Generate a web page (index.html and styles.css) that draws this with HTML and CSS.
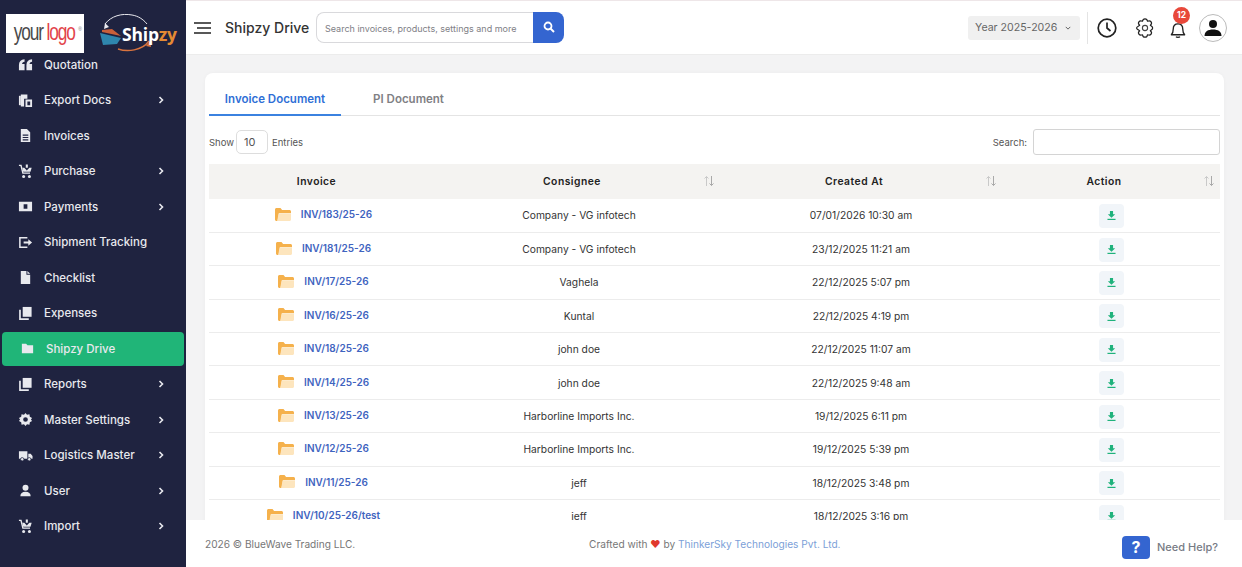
FILE: index.html
```html
<!DOCTYPE html>
<html lang="en">
<head>
<meta charset="utf-8">
<title>Shipzy Drive</title>
<link rel="stylesheet" href="styles.css">
</head>
<body>
<svg class="defs" width="0" height="0" aria-hidden="true">
  <symbol id="chev" viewBox="0 0 8 10"><path d="M2.500 2l3 3-3 3" fill="none" stroke="currentColor" stroke-width="1.600"/></symbol>
  <symbol id="cart" viewBox="0 0 16 16"><path d="M1 1.500h2.200l2 8.200h7.600" fill="none" stroke="currentColor" stroke-width="1.500"/><path d="M4.600 4h10l-1.300 4.200H5.600z M8.300 0.500h2.200V4h1.600L9.400 7 6.700 4h1.600z" fill="currentColor" fill-rule="evenodd"/><circle cx="6" cy="13.300" r="1.600" fill="currentColor"/><circle cx="12.200" cy="13.300" r="1.600" fill="currentColor"/></symbol>
  <symbol id="copy" viewBox="0 0 16 16"><path d="M5 1h9.500v10.500H5z" fill="currentColor"/><path d="M3 4H1.200v11h10.300v-2H3z" fill="currentColor"/></symbol>
  <symbol id="dl" viewBox="0 0 12 12"><path d="M4.300 1h3.400v3.600H10L6 8.400 2 4.600h2.300z" fill="currentColor"/><rect x="1.600" y="9.600" width="8.800" height="1.300" fill="currentColor"/></symbol>
  <symbol id="sort" viewBox="0 0 12 12"><path d="M3.500 11V1.500M1.500 3.500l2-2 2 2" fill="none" stroke="#c9c9c9" stroke-width="1"/><path d="M8.500 1v9.500M6.500 8.500l2 2 2-2" fill="none" stroke="#a9a9a9" stroke-width="1"/></symbol>
  <symbol id="folder" viewBox="0 0 16 13"><path d="M0 1.500C0 .7.700 0 1.500 0h4l1.600 2h7.400c.8 0 1.500.7 1.500 1.500V5H4.200L2.600 13H1.500C.7 13 0 12.300 0 11.500z" fill="#f5b14c"/><path d="M3.600 5.200H16v6.300c0 .8-.7 1.500-1.500 1.500H2.200z" fill="#fde5bd"/></symbol>
</svg>
<div class="app">
  <aside class="sidebar">
    <div class="brand">
      <div class="your-logo"><span class="your">your</span><span class="logo">logo</span><sup class="reg">®</sup></div>
      <div class="shipzy">
        <svg class="shipzy-art" viewBox="0 0 78 40" width="78" height="40" aria-hidden="true">
          <path d="M5 10C11 2 22-1 32 1c6 1 11 4 15 9" fill="none" stroke="#e9e9ee" stroke-width="1"/>
          <path d="M5 9l-1 6 5-2z" fill="#e9e9ee"/>
          <path d="M18 35c9 3 24 2 31-8" fill="none" stroke="#d9743f" stroke-width="1.400"/>
          <path d="M46 32l4-5 1 6z" fill="#d9743f"/>
          <path d="M0 19l21 5-4 6-14 1z" fill="#2f86ad"/>
          <path d="M2 16l10-1 9 7-19-4z" fill="#c9603a"/>
        </svg>
        <span class="shipzy-name">Ship<span class="zy">zy</span></span>
      </div>
    </div>
    <nav class="nav">
      <a class="item"><svg class="ic" viewBox="0 0 16 16"><path fill="currentColor" d="M1 14V8.500C1 5 3 3 7 2.500V5C5.300 5.300 4.500 6 4.300 7.500H7V14zM9 14V8.500C9 5 11 3 15 2.500V5c-1.700.3-2.500 1-2.700 2.500H15V14z"/></svg><span>Quotation</span></a>
      <a class="item"><svg class="ic" viewBox="0 0 16 16"><path fill="currentColor" d="M3 1.500h7V6H6.500v8.500H3z"/><path fill="currentColor" d="M8 7h7v8H8zM10 9v4h3V9z" fill-rule="evenodd"/><path fill="currentColor" d="M1 3h2v10H1z"/></svg><span>Export Docs</span><svg class="chev"><use href="#chev"/></svg></a>
      <a class="item"><svg class="ic" viewBox="0 0 16 16"><path fill="currentColor" fill-rule="evenodd" d="M3 1h6.500L13 4.500V15H3zM5 7v1.200h6V7zM5 9.500v1.200h6V9.500zM5 12v1.200h6V12z"/></svg><span>Invoices</span></a>
      <a class="item"><svg class="ic"><use href="#cart"/></svg><span>Purchase</span><svg class="chev"><use href="#chev"/></svg></a>
      <a class="item"><svg class="ic" viewBox="0 0 16 16"><path fill="currentColor" fill-rule="evenodd" d="M1 3h14v10H1zM6 5.500v5h4v-5z"/></svg><span>Payments</span><svg class="chev"><use href="#chev"/></svg></a>
      <a class="item"><svg class="ic" viewBox="0 0 16 16"><path fill="none" stroke="currentColor" stroke-width="1.600" d="M10 3H2v10h8"/><path fill="currentColor" d="M6 7h5V4.500L15 8l-4 3.500V9H6z"/></svg><span>Shipment Tracking</span></a>
      <a class="item"><svg class="ic" viewBox="0 0 16 16"><path fill="currentColor" d="M3 1h6v4h4v10H3z"/><path fill="currentColor" d="M10 1l3 3h-3z"/></svg><span>Checklist</span></a>
      <a class="item"><svg class="ic"><use href="#copy"/></svg><span>Expenses</span></a>
      <a class="item active"><svg class="ic" viewBox="0 0 16 16"><path fill="currentColor" d="M2 3h4.500L8 4.500h6V13H2z"/></svg><span>Shipzy Drive</span></a>
      <a class="item"><svg class="ic"><use href="#copy"/></svg><span>Reports</span><svg class="chev"><use href="#chev"/></svg></a>
      <a class="item"><svg class="ic" viewBox="0 0 16 16"><path fill="currentColor" fill-rule="evenodd" d="M8 1l1.600 2 2.600-.6.400 2.600L15 6.500 13.800 8 15 9.500 12.600 11l-.4 2.600-2.600-.6L8 15l-1.600-2-2.600.6-.4-2.600L1 9.500 2.200 8 1 6.500 3.400 5l.4-2.600 2.600.6zM8 5.500a2.500 2.500 0 1 0 0 5 2.500 2.500 0 0 0 0-5z"/></svg><span>Master Settings</span><svg class="chev"><use href="#chev"/></svg></a>
      <a class="item"><svg class="ic" viewBox="0 0 16 16"><path fill="currentColor" d="M1 3.500h9v8H1zM11 6h2.500L15.500 8.500v3H11z"/><circle cx="4.500" cy="12" r="1.800" fill="currentColor" stroke="#1f2340" stroke-width=".8"/><circle cx="12" cy="12" r="1.800" fill="currentColor" stroke="#1f2340" stroke-width=".8"/></svg><span>Logistics Master</span><svg class="chev"><use href="#chev"/></svg></a>
      <a class="item"><svg class="ic" viewBox="0 0 16 16"><circle cx="8" cy="5" r="3.200" fill="currentColor"/><path fill="currentColor" d="M2.500 14c0-3 2-4.700 5.500-4.700s5.500 1.700 5.500 4.700z"/></svg><span>User</span><svg class="chev"><use href="#chev"/></svg></a>
      <a class="item"><svg class="ic"><use href="#cart"/></svg><span>Import</span><svg class="chev"><use href="#chev"/></svg></a>
    </nav>
  </aside>
  <div class="main">
    <header class="topbar">
      <svg class="burger" viewBox="0 0 17 12" width="17" height="12"><path d="M0 1h17M3 6h14M0 11h17" stroke="#222" stroke-width="1.500"/></svg>
      <h1 class="title">Shipzy Drive</h1>
      <div class="search">
        <div class="search-field">Search invoices, products, settings and more</div>
        <div class="search-btn"><svg viewBox="0 0 12 12" width="12" height="12"><circle cx="5" cy="5" r="3.500" fill="none" stroke="#fff" stroke-width="1.800"/><path d="M7.500 7.500L11 11" stroke="#fff" stroke-width="2"/></svg></div>
      </div>
      <div class="top-right">
        <div class="year"><span>Year 2025-2026</span><svg viewBox="0 0 8 5" width="6" height="4"><path d="M1 1l3 3 3-3" fill="none" stroke="#555" stroke-width="1.200"/></svg></div>
        <div class="divider"></div>
        <svg class="tool clock" viewBox="0 0 20 20" width="20" height="20"><circle cx="10" cy="10" r="8.800" fill="none" stroke="#222" stroke-width="1.700"/><path d="M10 4.500V10l3.500 3" fill="none" stroke="#222" stroke-width="1.700"/></svg>
        <svg class="tool gear" viewBox="0 0 20 20" width="20" height="20"><path d="M7.500 3.200C7.800 1.300 9 .8 10 .8s2.200.5 2.500 2.400c1.800-.8 3-.2 3.600.7.600.9.700 2.200-.8 3.300 1.700 1 2.400 1.800 2.400 2.800s-.7 1.800-2.400 2.800c1.500 1.100 1.400 2.400.8 3.300-.6.900-1.800 1.500-3.600.7-.3 1.900-1.500 2.400-2.500 2.400s-2.200-.5-2.500-2.400c-1.800.8-3 .2-3.600-.7-.6-.9-.7-2.200.8-3.300C3 11.800 1.500 11 1.500 10s1.500-1.800 3.200-2.800C3.200 6.100 3.300 4.800 3.900 3.900c.6-.9 1.800-1.500 3.600-.7z" fill="none" stroke="#222" stroke-width="1.200" stroke-linejoin="round"/><circle cx="10" cy="10" r="2.600" fill="none" stroke="#444" stroke-width="1.100"/></svg>
        <div class="bell">
          <svg viewBox="0 0 16 20" width="16" height="19"><path d="M1 15.500c1.500-1.500 2-3 2-6 0-3.500 2-5.500 5-5.500s5 2 5 5.500c0 3 .5 4.500 2 6z" fill="none" stroke="#222" stroke-width="1.400" stroke-linejoin="round"/><path d="M6 17.500c.5 1 3.500 1 4 0" fill="none" stroke="#222" stroke-width="1.400"/></svg>
          <span class="badge">12</span>
        </div>
        <div class="avatar"><svg viewBox="0 0 20 20" width="20" height="20"><circle cx="10" cy="6" r="4" fill="#111"/><path d="M1.500 18c0-4.500 3.500-6.500 8.500-6.500s8.500 2 8.500 6.500z" fill="#111"/></svg></div>
      </div>
    </header>
    <section class="content">
      <div class="card">
        <div class="tabs"><a class="tab on">Invoice Document</a><a class="tab">PI Document</a></div>
        <div class="controls">
          <div class="show"><span>Show</span><span class="len">10</span><span>Entries</span></div>
          <div class="find"><span>Search:</span><span class="find-box"></span></div>
        </div>
        <table class="grid">
          <colgroup><col class="c1"><col class="c2"><col class="c2"><col class="c4"></colgroup>
          <thead><tr><th>Invoice</th><th>Consignee<svg class="sort"><use href="#sort"/></svg></th><th>Created At<svg class="sort"><use href="#sort"/></svg></th><th>Action<svg class="sort"><use href="#sort"/></svg></th></tr></thead>
          <tbody>
            <tr><td><a class="inv"><svg class="fold"><use href="#folder"/></svg>INV/183/25-26</a></td><td>Company - VG infotech</td><td>07/01/2026 10:30 am</td><td><span class="dl"><svg><use href="#dl"/></svg></span></td></tr>
            <tr><td><a class="inv"><svg class="fold"><use href="#folder"/></svg>INV/181/25-26</a></td><td>Company - VG infotech</td><td>23/12/2025 11:21 am</td><td><span class="dl"><svg><use href="#dl"/></svg></span></td></tr>
            <tr><td><a class="inv"><svg class="fold"><use href="#folder"/></svg>INV/17/25-26</a></td><td>Vaghela</td><td>22/12/2025 5:07 pm</td><td><span class="dl"><svg><use href="#dl"/></svg></span></td></tr>
            <tr><td><a class="inv"><svg class="fold"><use href="#folder"/></svg>INV/16/25-26</a></td><td>Kuntal</td><td>22/12/2025 4:19 pm</td><td><span class="dl"><svg><use href="#dl"/></svg></span></td></tr>
            <tr><td><a class="inv"><svg class="fold"><use href="#folder"/></svg>INV/18/25-26</a></td><td>john doe</td><td>22/12/2025 11:07 am</td><td><span class="dl"><svg><use href="#dl"/></svg></span></td></tr>
            <tr><td><a class="inv"><svg class="fold"><use href="#folder"/></svg>INV/14/25-26</a></td><td>john doe</td><td>22/12/2025 9:48 am</td><td><span class="dl"><svg><use href="#dl"/></svg></span></td></tr>
            <tr><td><a class="inv"><svg class="fold"><use href="#folder"/></svg>INV/13/25-26</a></td><td>Harborline Imports Inc.</td><td>19/12/2025 6:11 pm</td><td><span class="dl"><svg><use href="#dl"/></svg></span></td></tr>
            <tr><td><a class="inv"><svg class="fold"><use href="#folder"/></svg>INV/12/25-26</a></td><td>Harborline Imports Inc.</td><td>19/12/2025 5:39 pm</td><td><span class="dl"><svg><use href="#dl"/></svg></span></td></tr>
            <tr><td><a class="inv"><svg class="fold"><use href="#folder"/></svg>INV/11/25-26</a></td><td>jeff</td><td>18/12/2025 3:48 pm</td><td><span class="dl"><svg><use href="#dl"/></svg></span></td></tr>
            <tr><td><a class="inv"><svg class="fold"><use href="#folder"/></svg>INV/10/25-26/test</a></td><td>jeff</td><td>18/12/2025 3:16 pm</td><td><span class="dl"><svg><use href="#dl"/></svg></span></td></tr>
          </tbody>
        </table>
      </div>
    </section>
    <footer class="footer">
      <div class="copy">2026 © BlueWave Trading LLC.</div>
      <div class="crafted">Crafted with <span class="heart">♥</span> by <a class="maker">ThinkerSky Technologies Pvt. Ltd.</a></div>
      <div class="help"><span class="help-btn">?</span><span class="help-text">Need Help?</span></div>
    </footer>
  </div>
</div>
</body>
</html>
```
FILE: styles.css
```css
* { box-sizing: border-box; }
html, body { margin: 0; height: 100%; overflow: hidden; }
body { font-family: Inter, "Liberation Sans", sans-serif; color: #333; background: #fff; }
.defs { position: absolute; }
.app { display: flex; height: 567px; }

.sidebar { width: 186px; flex: none; background: #1f2340; color: #e8e9ee; }
.brand { height: 47px; padding: 14px 0 0 6px; display: flex; gap: 16px; align-items: flex-start; position: relative; z-index: 1; }
.your-logo { width: 78px; height: 39px; background: #fff; display: flex; align-items: center; justify-content: center; font-family: "Liberation Sans", sans-serif; font-size: 24px; letter-spacing: -1.500px; padding-bottom: 3px; }
.your-logo span { display: inline-block; transform: scaleX(.72); }
.your { color: #4a4a4a; margin-right: -5px; }
.logo { color: #e2434a; margin-left: -3px; }
.reg { font-size: 5px; color: #777; letter-spacing: 0; margin-top: -6px; margin-left: -2px; }
.shipzy { width: 78px; height: 40px; position: relative; }
.shipzy-art { display: block; }
.shipzy-name { position: absolute; left: 22px; top: 8px; font-family: "Open Sans", sans-serif; font-weight: 700; font-size: 17.500px; line-height: 24px; color: #fff; letter-spacing: -.2px; }
.zy { color: #e58a33; }

.nav { display: grid; grid-auto-rows: 35.500px; align-items: center; }
.item { display: flex; align-items: center; gap: 10px; padding-left: 18px; font-size: 11.500px; font-weight: 500; height: 100%; }
.item > span { flex: 1; }
.ic { width: 15px; height: 15px; flex: none; margin-right: 1px; }
.chev { width: 8px; height: 10px; margin-right: 21px; flex: none; }
.item.active { background: #20b578; height: 34px; margin: 0 2px; border-radius: 4px; }

.main { flex: 1; min-width: 0; display: flex; flex-direction: column; background: #f3f3f4; }
.topbar { height: 55px; flex: none; background: #fff; border-top: 1px solid #eee6e8; border-bottom: 1px solid #ececec; display: flex; align-items: center; padding: 0 15px 0 8px; position: relative; }
.burger { flex: none; margin-right: 14px; }
.title { margin: 0 6px 0 0; font-size: 14px; font-weight: 500; color: #333; white-space: nowrap; width: 85px; }
.search { display: flex; width: 248px; height: 31px; margin-top: -1px; }
.search-field { flex: 1; border: 1px solid #d9d9dc; border-right: 0; border-radius: 8px 0 0 8px; font-size: 9px; color: #808086; padding-left: 8px; line-height: 32px; white-space: nowrap; }
.search-btn { width: 31px; background: #3465d0; border-radius: 0 8px 8px 0; display: flex; align-items: center; justify-content: center; }
.top-right { margin-left: auto; display: flex; align-items: center; }
.year { width: 112px; height: 24px; background: #f0f0f0; border-radius: 3px; display: flex; align-items: center; justify-content: space-between; padding: 0 9px 0 7px; font-size: 10.600px; color: #666; }
.divider { width: 1px; height: 32px; background: #e4e4e4; margin: 0 9px 0 7px; }
.clock { margin-right: 18px; }
.gear { margin-right: 15px; }
.bell { width: 18px; height: 24px; position: relative; margin-right: 11px; padding-top: 4px; }
.badge { position: absolute; left: 3px; top: -9px; width: 17px; height: 17px; border-radius: 50%; background: #e8483a; color: #fff; font-size: 8.500px; font-weight: 700; text-align: center; line-height: 17px; }
.avatar { width: 28px; height: 28px; border-radius: 50%; border: 1px solid #bbb; display: flex; align-items: center; justify-content: center; overflow: hidden; }

.content { flex: 1; min-height: 0; overflow: hidden; padding: 18px 18px 0 19px; }
.card { background: #fff; border-radius: 8px; padding: 9px 4px 0; box-shadow: 0 0 4px rgba(0,0,0,.03); }
.tabs { display: flex; height: 34px; border-bottom: 1px solid #e4e4e4; }
.tab { height: 34px; width: 132px; padding-top: 10px; text-align: center; font-size: 11.500px; font-weight: 600; color: #808084; }
.tab:last-child { width: 103px; margin-left: 16px; }
.tab.on { color: #2f6fd6; border-bottom: 2px solid #3b82e0; }
.controls { display: flex; justify-content: space-between; align-items: center; height: 26px; margin: 13px 0 9px; font-size: 9.500px; color: #555; }
.show, .find { display: flex; align-items: center; }
.len { width: 32px; height: 24px; border: 1px solid #ddd; border-radius: 5px; margin: 0 4px 0 2px; padding-left: 7px; line-height: 22px; font-size: 11px; }
.find-box { width: 187px; height: 26px; border: 1px solid #d4d4d4; border-radius: 3px; margin-left: 6px; }

.grid { width: 1011px; border-collapse: collapse; table-layout: fixed; }
.c1 { width: 229px; }
.c2 { width: 282px; }
.c4 { width: 218px; }
.grid th { height: 35px; background: #f4f3f1; font-size: 10.300px; font-weight: 600; color: #222; letter-spacing: .5px; text-align: center; padding: 0 14px 2px 0; position: relative; }
.grid td { height: 33.400px; border-bottom: 1px solid #ececec; text-align: center; font-size: 10.250px; color: #333; padding: 0; }
.sort { position: absolute; right: 5px; top: 11px; width: 12px; height: 12px; }
.inv { display: inline-flex; align-items: center; vertical-align: middle; margin-bottom: 2px; color: #3f64c0; font-size: 10px; font-weight: 600; }
.fold { width: 16px; height: 13px; margin-right: 10px; }
.dl { display: inline-flex; width: 25px; height: 24px; margin-top: 1px; background: #f1f5f9; border-radius: 4px; align-items: center; justify-content: center; vertical-align: middle; }
.dl svg { width: 11px; height: 11px; color: #20b27c; }

.footer { height: 47px; flex: none; background: #fff; display: flex; align-items: center; padding: 0 24px 0 19px; font-size: 10.150px; color: #777; position: relative; }
.copy { width: 384px; }
.crafted { white-space: nowrap; }
.heart { color: #e0392e; font-size: 10px; }
.maker { color: #7c9fd8; }
.help { margin-left: auto; display: flex; align-items: center; gap: 7px; padding-top: 7px; }
.help-btn { width: 28px; height: 23px; background: #3465d0; border-radius: 4px; color: #fff; font-size: 16px; font-weight: 700; text-align: center; line-height: 23px; }
.help-text { font-size: 11px; font-weight: 500; color: #777b85; }
```
